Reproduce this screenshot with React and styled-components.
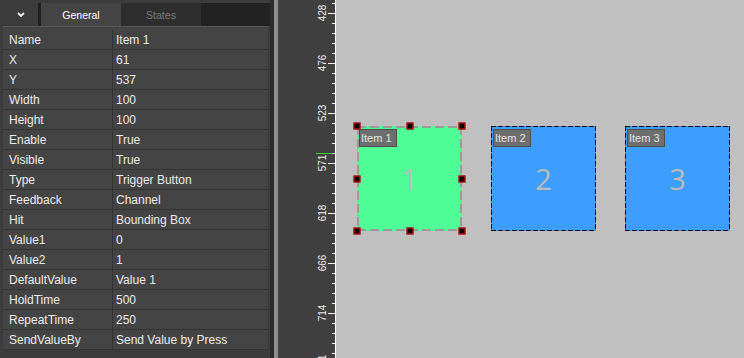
import styled, { createGlobalStyle } from "styled-components";

const GlobalStyle = createGlobalStyle`
  html, body {
    margin: 0;
    padding: 0;
    height: 100%;
    overflow: hidden;
    background: #3c3c3c;
  }
  #root {
    height: 100%;
  }
`;

const properties = [
  ["Name", "Item 1"],
  ["X", "61"],
  ["Y", "537"],
  ["Width", "100"],
  ["Height", "100"],
  ["Enable", "True"],
  ["Visible", "True"],
  ["Type", "Trigger Button"],
  ["Feedback", "Channel"],
  ["Hit", "Bounding Box"],
  ["Value1", "0"],
  ["Value2", "1"],
  ["DefaultValue", "Value 1"],
  ["HoldTime", "500"],
  ["RepeatTime", "250"],
  ["SendValueBy", "Send Value by Press"],
];

const items = [
  { id: 1, label: "Item 1", color: "#50fe98", selected: true },
  { id: 2, label: "Item 2", color: "#3d9eff", selected: false },
  { id: 3, label: "Item 3", color: "#3d9eff", selected: false },
];

const rulerLabels = ["428", "476", "523", "571", "618", "666", "714", "761"];

const handleSpots = [
  [0, 0], [50, 0], [100, 0],
  [0, 50], [100, 50],
  [0, 100], [50, 100], [100, 100],
];

// dashed outline drawn like Qt's DashLine pen (dash 4w, gap 2w)
function dashedEdges(color, w) {
  const d = 4 * w + 1;
  const g = 6 * w + 1;
  const h = `repeating-linear-gradient(90deg, ${color} 0 ${d}px, transparent ${d}px ${g}px)`;
  const v = `repeating-linear-gradient(180deg, ${color} 0 ${d}px, transparent ${d}px ${g}px)`;
  return `
    ${h} left top / 100% ${w}px no-repeat,
    ${h} left bottom / 100% ${w}px no-repeat,
    ${v} left top / ${w}px 100% no-repeat,
    ${v} right top / ${w}px 100% no-repeat
  `;
}

export default function App() {
  return (
    <>
      <GlobalStyle />
      <Screen>
        <Panel>
          <TabBar>
            <MenuButton>
              <svg width="8" height="5" viewBox="0 0 8 5">
                <polyline points="1,1 4,4 7,1" fill="none" stroke="#f0f0f0" strokeWidth="1.8" />
              </svg>
            </MenuButton>
            <TabGap />
            <Tab $active>General</Tab>
            <Tab>States</Tab>
            <TabFill />
          </TabBar>
          <PropTable>
            {properties.map(([key, value]) => (
              <PropRow key={key}>
                <KeyCell>{key}</KeyCell>
                <ValueCell>{value}</ValueCell>
              </PropRow>
            ))}
          </PropTable>
        </Panel>

        <Splitter>
          <SplitEdge />
          <SplitGrip />
        </Splitter>

        <Ruler>
          <svg width="57" height="358">
            {Array.from({ length: 36 }, (_, k) => {
              const y = 3.5 + k * 10;
              const major = k % 5 === 1;
              return (
                <line key={k} x1={major ? 50 : 54} x2="57" y1={y} y2={y} stroke="#ffffff" strokeWidth="1" />
              );
            })}
            {rulerLabels.map((label, i) => (
              <text
                key={label}
                transform={`translate(48, ${13 + i * 50}) rotate(-90)`}
                textAnchor="middle"
                fontFamily="'Liberation Sans', Arial, sans-serif"
                fontSize="10"
                fill="#ececec"
              >
                {label}
              </text>
            ))}
            <line x1="38" x2="54" y1="153.5" y2="153.5" stroke="#2fd02f" strokeWidth="1" />
          </svg>
        </Ruler>

        <Canvas>
          {items.map((item) => (
            <ItemBox key={item.id} $color={item.color} $selected={item.selected}>
              <ItemLabel>{item.label}</ItemLabel>
              {item.id}
              {item.selected && (
                <HandleLayer>
                  {handleSpots.map(([x, y]) => (
                    <Handle key={`${x}-${y}`} style={{ left: `${x}%`, top: `${y}%` }} />
                  ))}
                </HandleLayer>
              )}
            </ItemBox>
          ))}
        </Canvas>
      </Screen>
    </>
  );
}

const Screen = styled.div`
  display: flex;
  width: 744px;
  height: 358px;
  overflow: hidden;
`;

const Panel = styled.div`
  width: 270px;
  flex-shrink: 0;
  display: flex;
  flex-direction: column;
  background: #3c3c3c;
  font-family: "Liberation Sans", Arial, sans-serif;
`;

const TabBar = styled.div`
  display: flex;
  height: 23px;
  margin-top: 3px;
`;

const MenuButton = styled.div`
  width: 38px;
  display: flex;
  align-items: center;
  justify-content: center;
  padding-left: 3px;
  box-sizing: border-box;

  svg {
    display: block;
  }
`;

const TabGap = styled.div`
  width: 3px;
  background: #202020;
`;

const Tab = styled.div`
  width: 80px;
  display: flex;
  align-items: center;
  justify-content: center;
  font-size: 10.5px;
  background: ${(p) => (p.$active ? "#454545" : "#2e2e2e")};
  color: ${(p) => (p.$active ? "#ffffff" : "#7c7c7c")};
`;

const TabFill = styled.div`
  flex: 1;
  background: #222222;
`;

const PropTable = styled.div`
  margin-left: 3px;
  width: 265px;
  border-top: 1px solid #575757;
  padding-top: 3px;
  background: #444444;
`;

const PropRow = styled.div`
  display: grid;
  grid-template-columns: 110px 1fr;
  height: 20px;
  box-sizing: border-box;
  border-bottom: 1px solid #343434;
  font-size: 12px;
  color: #ececec;
  line-height: 20px;
`;

const KeyCell = styled.div`
  padding-left: 6px;
  border-right: 1px solid #343434;
  white-space: nowrap;
`;

const ValueCell = styled.div`
  padding-left: 3px;
  white-space: nowrap;
`;

const Splitter = styled.div`
  display: flex;
  width: 8px;
  flex-shrink: 0;
`;

const SplitEdge = styled.div`
  width: 4px;
  background: #2c2c2c;
`;

const SplitGrip = styled.div`
  width: 4px;
  background: #8b8e94;
`;

const Ruler = styled.div`
  width: 57px;
  flex-shrink: 0;
  background: #404040;
  border-right: 1px solid #ffffff;

  svg {
    display: block;
  }
`;

const Canvas = styled.div`
  flex: 1;
  display: flex;
  align-items: flex-start;
  gap: 29px;
  padding: 126px 0 0 21px;
  background: #c0c0c0;
`;

const ItemBox = styled.div`
  position: relative;
  width: 105px;
  height: 105px;
  flex-shrink: 0;
  display: flex;
  align-items: center;
  justify-content: center;
  background: ${(p) => dashedEdges(p.$selected ? "#9a9a9a" : "#000000", p.$selected ? 2 : 1)},
    ${(p) => p.$color};
  font-family: "Open Sans", "DejaVu Sans", sans-serif;
  font-size: 29px;
  color: #bcbcbc;
`;

const ItemLabel = styled.div`
  position: absolute;
  top: 3px;
  left: 2px;
  width: 38px;
  height: 18px;
  box-sizing: border-box;
  border: 1px solid #4e4e4e;
  background: #6e6e6e;
  color: #e4e4e4;
  font-family: "Liberation Sans", Arial, sans-serif;
  font-size: 11px;
  line-height: 16px;
  padding-left: 1px;
`;

const HandleLayer = styled.div`
  position: absolute;
  inset: 0;
`;

const Handle = styled.div`
  position: absolute;
  width: 7px;
  height: 7px;
  box-sizing: border-box;
  transform: translate(-50%, -50%);
  background: #000000;
  border: 1px solid #ff1010;
`;
